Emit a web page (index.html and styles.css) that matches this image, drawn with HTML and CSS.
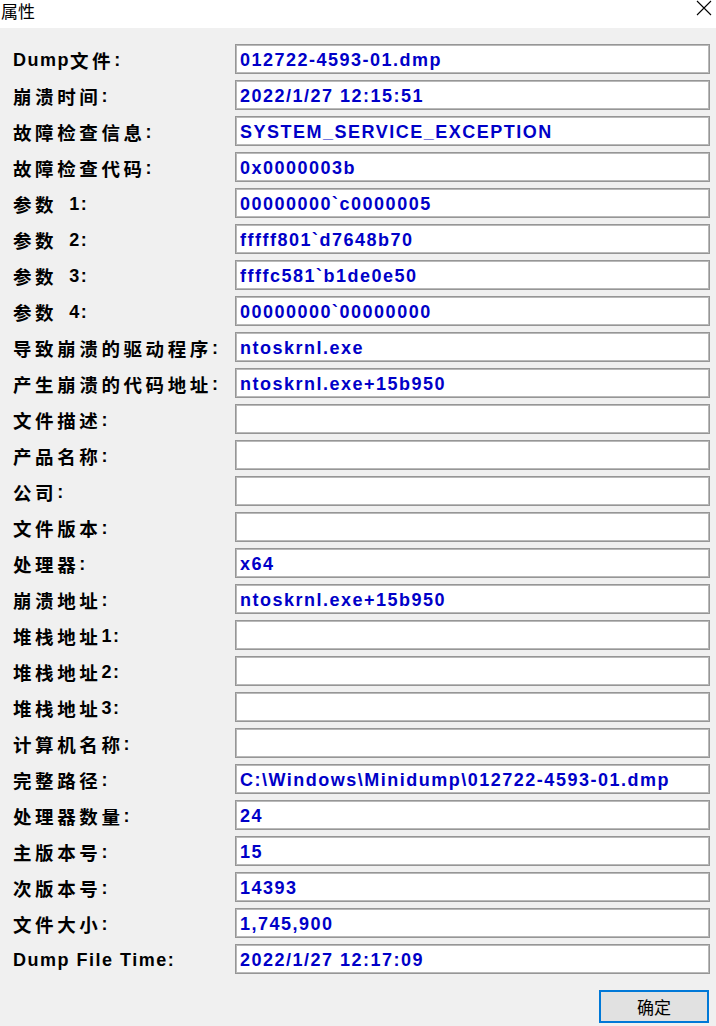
FILE: index.html
```html
<!DOCTYPE html>
<html lang="zh-CN">
<head>
<meta charset="utf-8">
<title>属性</title>
<link rel="stylesheet" href="styles.css">
</head>
<body>
<div class="window">
  <div class="titlebar">
    <span class="title">属性</span>
    <svg class="close" width="16" height="16" viewBox="0 0 16 16"><path d="M1 1 L15 15 M15 1 L1 15" stroke="#000" stroke-width="1.1" fill="none"/></svg>
  </div>
  <div class="content">
    <div class="grid">
      <div class="label">Dump<span class="cn">文件</span>:</div><div class="field">012722-4593-01.dmp</div>
      <div class="label"><span class="cn">崩溃时间</span>:</div><div class="field">2022/1/27 12:15:51</div>
      <div class="label"><span class="cn">故障检查信息</span>:</div><div class="field">SYSTEM_SERVICE_EXCEPTION</div>
      <div class="label"><span class="cn">故障检查代码</span>:</div><div class="field">0x0000003b</div>
      <div class="label"><span class="cn">参数</span><span class="gap"></span>1:</div><div class="field">00000000`c0000005</div>
      <div class="label"><span class="cn">参数</span><span class="gap"></span>2:</div><div class="field">fffff801`d7648b70</div>
      <div class="label"><span class="cn">参数</span><span class="gap"></span>3:</div><div class="field">ffffc581`b1de0e50</div>
      <div class="label"><span class="cn">参数</span><span class="gap"></span>4:</div><div class="field">00000000`00000000</div>
      <div class="label"><span class="cn">导致崩溃的驱动程序</span>:</div><div class="field">ntoskrnl.exe</div>
      <div class="label"><span class="cn">产生崩溃的代码地址</span>:</div><div class="field">ntoskrnl.exe+15b950</div>
      <div class="label"><span class="cn">文件描述</span>:</div><div class="field"></div>
      <div class="label"><span class="cn">产品名称</span>:</div><div class="field"></div>
      <div class="label"><span class="cn">公司</span>:</div><div class="field"></div>
      <div class="label"><span class="cn">文件版本</span>:</div><div class="field"></div>
      <div class="label"><span class="cn">处理器</span>:</div><div class="field">x64</div>
      <div class="label"><span class="cn">崩溃地址</span>:</div><div class="field">ntoskrnl.exe+15b950</div>
      <div class="label"><span class="cn">堆栈地址</span>1:</div><div class="field"></div>
      <div class="label"><span class="cn">堆栈地址</span>2:</div><div class="field"></div>
      <div class="label"><span class="cn">堆栈地址</span>3:</div><div class="field"></div>
      <div class="label"><span class="cn">计算机名称</span>:</div><div class="field"></div>
      <div class="label"><span class="cn">完整路径</span>:</div><div class="field">C:\Windows\Minidump\012722-4593-01.dmp</div>
      <div class="label"><span class="cn">处理器数量</span>:</div><div class="field">24</div>
      <div class="label"><span class="cn">主版本号</span>:</div><div class="field">15</div>
      <div class="label"><span class="cn">次版本号</span>:</div><div class="field">14393</div>
      <div class="label"><span class="cn">文件大小</span>:</div><div class="field">1,745,900</div>
      <div class="label">Dump File Time:</div><div class="field">2022/1/27 12:17:09</div>
    </div>
    <div class="actions">
      <button class="btn">确定</button>
    </div>
  </div>
</div>
</body>
</html>
```
FILE: styles.css
```css
html, body {
  margin: 0;
  padding: 0;
  background: #f0f0f0;
}
.window {
  width: 716px;
  height: 1026px;
  display: flex;
  flex-direction: column;
  background: #f0f0f0;
  overflow: hidden;
}
.titlebar {
  height: 28px;
  background: #ffffff;
  display: flex;
  justify-content: space-between;
  align-items: flex-start;
}
.title {
  font-family: "Noto Sans CJK SC", sans-serif;
  font-size: 17px;
  line-height: 22px;
  margin-top: 0;
  margin-left: 1px;
  color: #000;
}
.close {
  margin-top: 0px;
  margin-right: 4px;
}
.content {
  padding: 16px 6px 0 13px;
  display: flex;
  flex-direction: column;
}
.grid {
  display: grid;
  grid-template-columns: 222px 475px;
  grid-auto-rows: 30px;
  row-gap: 6px;
}
.label {
  font-family: "Liberation Sans", "Noto Sans CJK SC", sans-serif;
  font-weight: 700;
  font-size: 18px;
  letter-spacing: 1.5px;
  color: #000;
  display: flex;
  align-items: center;
  padding-top: 2px;
  white-space: nowrap;
}
.cn {
  font-family: "Noto Sans CJK SC", sans-serif;
  font-size: 18.5px;
  letter-spacing: 3.6px;
  font-weight: 700;
}
.gap {
  display: inline-block;
  width: 12px;
}
.field {
  box-sizing: border-box;
  background: #fff;
  border: 1px solid #969696;
  box-shadow: inset 0 0 0 1px #b9b9b9;
  padding: 2px 0 0 4px;
  font-family: "Liberation Sans", sans-serif;
  font-weight: 700;
  font-size: 18px;
  letter-spacing: 1.5px;
  color: #0000c8;
  display: flex;
  align-items: center;
  white-space: nowrap;
  overflow: hidden;
}
.actions {
  display: flex;
  justify-content: flex-end;
  margin-top: 16px;
}
.btn {
  width: 110px;
  height: 33px;
  box-sizing: border-box;
  border: 2px solid #0078d7;
  background: #e1e1e1;
  font-family: "Noto Sans CJK SC", sans-serif;
  font-size: 17px;
  color: #000;
  padding: 0;
  margin-right: 1px;
}
```
